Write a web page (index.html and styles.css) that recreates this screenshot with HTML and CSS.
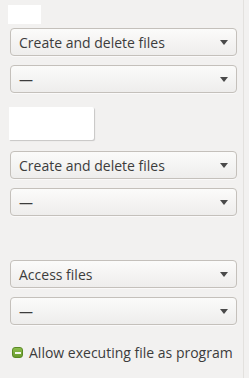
FILE: index.html
```html
<!DOCTYPE html>
<html lang="en">
<head>
  <meta charset="UTF-8">
  <meta name="viewport" content="width=device-width, initial-scale=1.0">
  <link rel="stylesheet" href="styles.css">
  <title>Permissions</title>
</head>
<body>
  <div class="page">
    <div class="panel">
      <div class="swatch swatch-small"></div>
      <div class="combo combo-first"><span>Create and delete files</span><i class="arrow"></i></div>
      <div class="combo"><span>—</span><i class="arrow"></i></div>

      <div class="swatch swatch-wide"></div>
      <div class="combo combo-first"><span>Create and delete files</span><i class="arrow"></i></div>
      <div class="combo"><span>—</span><i class="arrow"></i></div>

      <div class="combo combo-others"><span>Access files</span><i class="arrow"></i></div>
      <div class="combo"><span>—</span><i class="arrow"></i></div>

      <label class="check">
        <span class="box"><span class="dash"></span></span>
        <span>Allow executing file as program</span>
      </label>
    </div>
    <div class="edge"></div>
  </div>
</body>
</html>
```

FILE: styles.css
```css
*, *:before, *:after {
  margin: 0;
  padding: 0;
  box-sizing: border-box;
}
body {
  background: #f2f1f0;
  font-family: 'Open Sans', 'DejaVu Sans', sans-serif;
  font-size: 14px;
  color: #3c3c3c;
  width: 249px;
  height: 378px;
  overflow: hidden;
}

.page {
  display: flex;
  height: 100%;
}

.panel {
  width: 243px;
  padding: 5px 6px 0 10px;
  display: flex;
  flex-direction: column;
}

.edge {
  width: 1px;
  background: #e3e1de;
}

.swatch {
  background: #ffffff;
  margin-left: -2px;
}
.swatch-small {
  width: 33px;
  height: 19px;
  margin-bottom: 4px;
}
.swatch-wide {
  width: 85px;
  height: 33px;
  margin-top: 14px;
  margin-left: -1px;
  border-radius: 0 2px 2px 0;
  box-shadow: 1px 1px 1px rgba(0,0,0,0.18);
  margin-bottom: 11px;
}

.combo {
  height: 28px;
  display: flex;
  align-items: center;
  justify-content: space-between;
  padding: 0 8px 0 8px;
  border: 1px solid #c4c0bb;
  border-radius: 4px;
  background: linear-gradient(#fbfbfa, #eeedec);
  box-shadow: 0 1px 0 rgba(255,255,255,0.6);
  margin-top: 9px;
  white-space: nowrap;
}
.combo-first {
  margin-top: 0;
}
.combo-others {
  margin-top: 44px;
}

.arrow {
  width: 0;
  height: 0;
  border-left: 4.5px solid transparent;
  border-right: 4.5px solid transparent;
  border-top: 5px solid #4a4a4a;
}

.check {
  display: flex;
  align-items: center;
  gap: 6px;
  margin-top: 18px;
  margin-left: 2px;
}
.box {
  width: 11px;
  height: 11px;
  border-radius: 3px;
  background: linear-gradient(#8cbc4c, #6a9c2e);
  border: 1px solid #5a8a24;
  display: flex;
  align-items: center;
  justify-content: center;
}
.dash {
  width: 6px;
  height: 2px;
  background: #f4f8ee;
}
```
